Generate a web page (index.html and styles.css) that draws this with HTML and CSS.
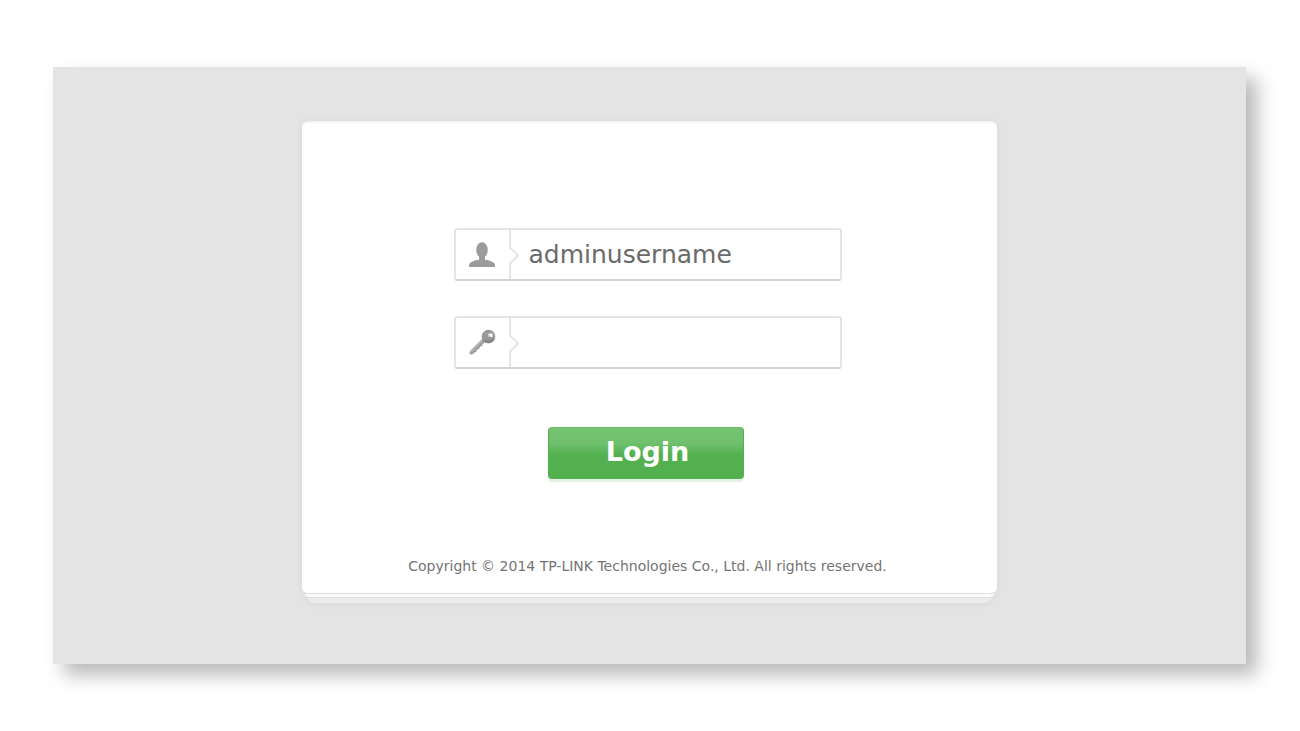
FILE: index.html
```html
<!DOCTYPE html>
<html lang="en">
<head>
<meta charset="utf-8">
<meta name="viewport" content="width=device-width, initial-scale=1">
<title>TP-LINK</title>
<link rel="stylesheet" href="styles.css">
</head>
<body>
<main class="panel">
  <div class="stack">
    <form class="card">
      <div class="field">
        <label class="field-icon" for="username" aria-label="Username">
          <svg class="glyph" viewBox="0 0 28 28" aria-hidden="true">
            <path fill="#9b9b9b" d="M1 26V23.500C2.500 20.500 6.500 20 9 18.800Q14 20.500 19 18.800C21.500 20 25.500 20.500 27 23.500V26Z"/>
            <ellipse cx="14" cy="9" rx="5.800" ry="7.800" fill="#9b9b9b"/>
            <path fill="#9b9b9b" d="M11 14H17V20H11Z"/>
          </svg>
        </label>
        <svg class="notch" viewBox="0 0 12 50" aria-hidden="true"><path d="M1 0V18L9 26L1 34V50"/></svg>
        <input class="field-input" id="username" type="text" value="adminusername">
      </div>
      <div class="field">
        <label class="field-icon" for="password" aria-label="Password">
          <svg class="glyph" viewBox="0 0 28 28" aria-hidden="true">
            <path fill="none" stroke="#9b9b9b" stroke-width="4" stroke-linecap="round" d="M16 11L3.500 23.500"/>
            <path fill="none" stroke="#bcbcbc" stroke-width="1.200" d="M15 11L3 23"/>
            <path fill="none" stroke="#9b9b9b" stroke-width="1.500" d="M12.500 15L14 17M9.500 18L11 20M6.500 21L8 23"/>
            <circle cx="20.500" cy="7.500" r="6.800" fill="#989898"/>
            <path fill="#868686" d="M14.500 10.500Q20 13 27 9Q25 14.500 20 14.300Q16 14 14.500 10.500Z"/>
            <path fill="#fff" d="M20.500 4.500H24.500V8H20.500Z"/>
            <path fill="#bcbcbc" d="M20.500 6.500H22.500V8H20.500Z"/>
          </svg>
        </label>
        <svg class="notch" viewBox="0 0 12 50" aria-hidden="true"><path d="M1 0V18L9 26L1 34V50"/></svg>
        <input class="field-input" id="password" type="password">
      </div>
      <button class="login" type="button">Login</button>
      <p class="copyright">Copyright © 2014 TP-LINK Technologies Co., Ltd. All rights reserved.</p>
    </form>
    <div class="sheet sheet-upper"></div>
    <div class="sheet sheet-lower"></div>
  </div>
</main>
</body>
</html>
```
FILE: styles.css
```css
* {
  box-sizing: border-box;
}

body {
  margin: 0;
  padding: 67px 54px 67px 53px;
  background: #fff;
  font-family: "DejaVu Sans", Verdana, sans-serif;
}

.panel {
  padding: 54px 24px 60px;
  background: #e4e4e4;
  box-shadow: 11px 11px 18px rgba(0, 0, 0, 0.28);
}

.stack {
  max-width: 695px;
  margin: 0 auto;
  border-radius: 6px 6px 16px 16px;
  box-shadow: 0 0 6px rgba(0, 0, 0, 0.06);
}

.card {
  display: flex;
  flex-direction: column;
  align-items: center;
  padding: 105px 4px 18px 0;
  background: #fff;
  border-top: 2px solid #f4f4f4;
  border-bottom: 1px solid #dedede;
  border-radius: 6px;
}

.sheet {
  height: 4px;
  background: #fafafa;
  border-bottom: 1px solid #dedede;
  border-radius: 0 0 6px 6px;
}

.sheet-upper {
  margin: 0 3px;
}

.sheet-lower {
  height: 6px;
  margin: 0 6px;
  background: #ececec;
}

.field {
  display: flex;
  width: 100%;
  max-width: 388px;
  height: 53px;
  margin-bottom: 35px;
  border: 2px solid #e4e4e4;
  border-bottom-color: #d4d4d4;
  border-radius: 3px;
}

.field-icon {
  display: flex;
  align-items: center;
  justify-content: center;
  flex: 0 0 53px;
}

.glyph {
  width: 28px;
  height: 28px;
}

.notch {
  flex: 0 0 12px;
  width: 12px;
  height: 49px;
  fill: none;
  stroke: #e4e4e4;
  stroke-width: 2;
}

.field-input {
  flex: 1;
  min-width: 0;
  padding: 0 8px;
  border: 0;
  outline: 0;
  background: transparent;
  color: #6a6a6a;
  font: 25px "DejaVu Sans", Verdana, sans-serif;
}

.login {
  width: 196px;
  height: 52px;
  margin-top: 23px;
  margin-right: 4px;
  padding: 0 0 4px 4px;
  border: 1px solid #56ae52;
  border-top-color: #6abb66;
  border-radius: 4px;
  background: linear-gradient(#75c372 0%, #70c06d 30%, #52b04e 55%, #52b04e 100%);
  box-shadow: 0 3px 1px #e3f2e2;
  color: #fff;
  font: bold 27px "DejaVu Sans", Verdana, sans-serif;
}

.copyright {
  margin: 78px 0 0;
  color: #757575;
  font-size: 14px;
  line-height: 18px;
}
```
